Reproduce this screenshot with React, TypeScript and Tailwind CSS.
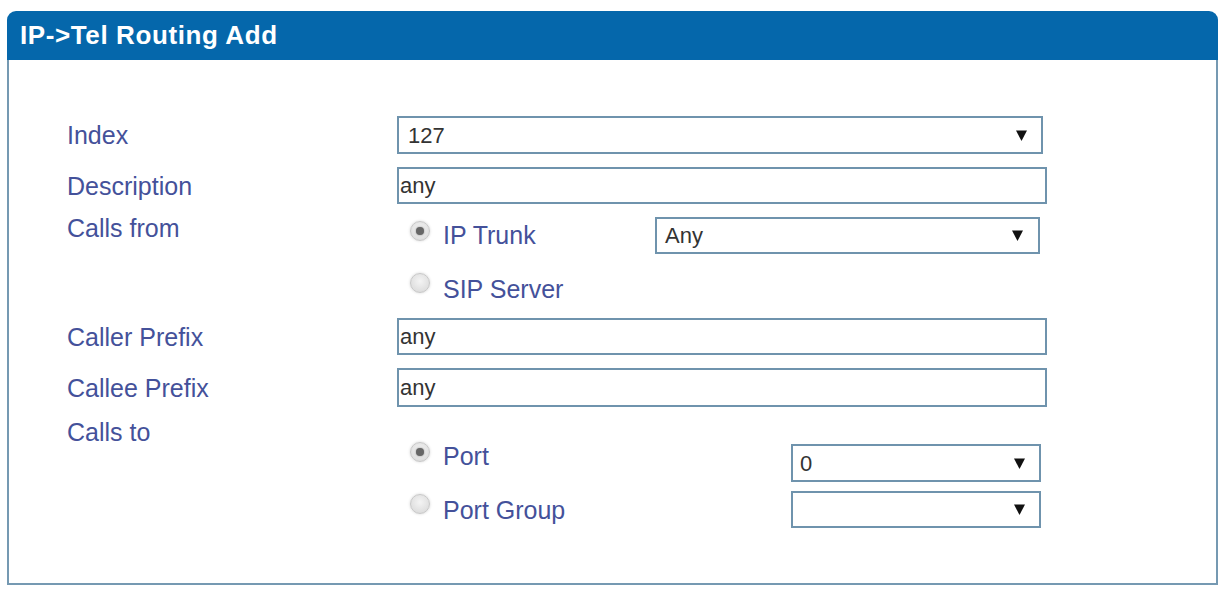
import { JSX } from 'react'

const font = { fontFamily: '"Liberation Sans", Arial, sans-serif' }

function Arrow(): JSX.Element {
  return (
    <svg className="w-[11px] h-[11px]" viewBox="0 0 11 11">
      <path d="M0 0.5 L11 0.5 L5.5 11 Z" fill="#111" />
    </svg>
  )
}

function Select({ value, className }: { value: string; className: string }): JSX.Element {
  return (
    <div className={`flex items-center justify-between border-2 border-[#6f93ad] bg-white text-[22px] text-[#333] ${className}`}>
      <span>{value}</span>
      <Arrow />
    </div>
  )
}

function Input({ className }: { className: string }): JSX.Element {
  return (
    <div className={`flex items-center border-2 border-[#6f93ad] bg-white pl-px text-[22px] text-[#333] ${className}`}>
      any
    </div>
  )
}

function Radio({ checked, label, shift }: { checked?: boolean; label: string; shift: string }): JSX.Element {
  return (
    <div className="flex items-center">
      <div className={`w-[20px] h-[20px] rounded-full border border-[#c8c8c8] bg-[radial-gradient(circle_at_50%_40%,#f4f4f4,#d6d6d6)] shadow-[0_0_3px_#d4d4d4] flex items-center justify-center ${shift}`}>
        {checked && <div className="w-[8px] h-[8px] rounded-full bg-[#666] shadow-[0_0_2px_#888]" />}
      </div>
      <span className="ml-[13px] text-[25px] text-[#44519a]">{label}</span>
    </div>
  )
}

function Label({ children, className = '' }: { children: string; className?: string }): JSX.Element {
  return <div className={`w-[330px] shrink-0 text-[25px] leading-[28px] text-[#44519a] ${className}`}>{children}</div>
}

export default function App(): JSX.Element {
  return (
    <div className="w-[1223px] h-[592px] bg-white pt-[11px] pl-[7px]" style={font}>
      <div className="w-[1211px] h-[574px] flex flex-col">
        {/* Header */}
        <div className="h-[49px] shrink-0 bg-[#0567ab] rounded-t-[9px] flex items-center pl-[13px]">
          <span className="text-white font-bold text-[26px] tracking-[0.6px]">IP-&gt;Tel Routing Add</span>
        </div>

        {/* Body */}
        <div className="flex-1 border-2 border-t-0 border-[#7599b2] pl-[58px] pt-[56px]">
          <div className="flex items-center h-[38px]">
            <Label>Index</Label>
            <Select value="127" className="w-[646px] h-[38px] pl-[9px] pr-[14px]" />
          </div>

          <div className="flex items-center h-[37px] mt-[13px]">
            <Label>Description</Label>
            <Input className="w-[650px] h-[37px]" />
          </div>

          <div className="flex items-start mt-[13px]">
            <Label className="-mt-[3px]">Calls from</Label>
            <div className="flex flex-col pl-[13px]">
              <div className="flex items-center h-[37px]">
                <div className="w-[245px]">
                  <Radio checked label="IP Trunk" shift="mb-[10px]" />
                </div>
                <Select value="Any" className="w-[385px] h-[37px] pl-[8px] pr-[15px]" />
              </div>
              <div className="flex items-center h-[40px] mt-[16px]">
                <Radio label="SIP Server" shift="mb-[14px]" />
              </div>
            </div>
          </div>

          <div className="flex items-center h-[37px] mt-[8px]">
            <Label>Caller Prefix</Label>
            <Input className="w-[650px] h-[37px]" />
          </div>

          <div className="flex items-center h-[39px] mt-[13px]">
            <Label>Callee Prefix</Label>
            <Input className="w-[650px] h-[39px]" />
          </div>

          <div className="flex items-start mt-[11px]">
            <Label>Calls to</Label>
            <div className="flex flex-col pl-[13px] pt-[26px]">
              <div className="flex items-center h-[38px]">
                <div className="w-[381px] mb-[12px]">
                  <Radio checked label="Port" shift="mb-[10px]" />
                </div>
                <Select value="0" className="w-[250px] h-[38px] pl-[7px] pr-[14px]" />
              </div>
              <div className="flex items-center h-[37px] mt-[9px]">
                <div className="w-[381px] mt-[2px]">
                  <Radio label="Port Group" shift="mb-[14px]" />
                </div>
                <Select value="" className="w-[250px] h-[37px] pl-[7px] pr-[14px]" />
              </div>
            </div>
          </div>
        </div>
      </div>
    </div>
  )
}
